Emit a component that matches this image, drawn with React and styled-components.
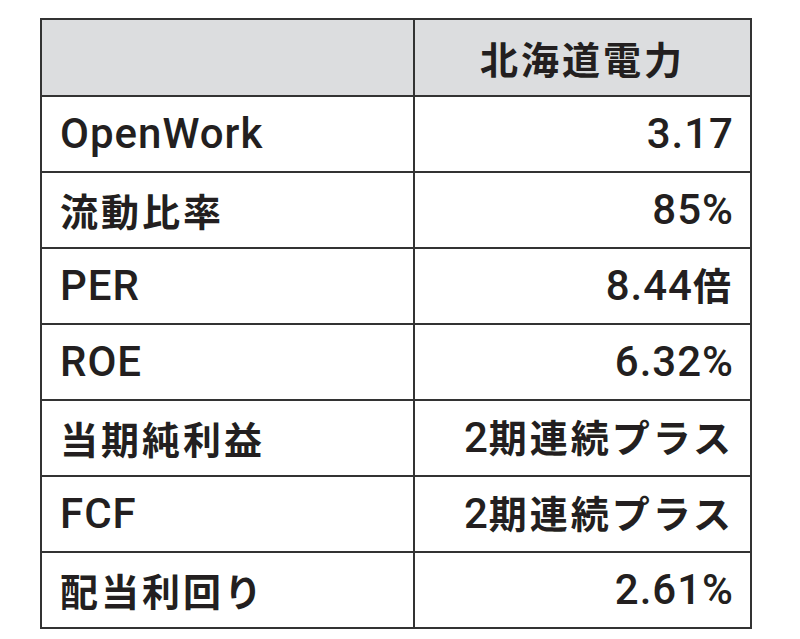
import styled, { createGlobalStyle } from 'styled-components';

const GlobalStyle = createGlobalStyle`
  body {
    margin: 0;
    background: #ffffff;
    font-family: "Noto Sans CJK JP", "Noto Sans", sans-serif;
  }
`;

const Page = styled.div`
  padding: 18px 0 0 40px;
`;

const Table = styled.table`
  width: 712px;
  border-collapse: collapse;
  border: 2px solid #333333;
  table-layout: fixed;
  color: #231f20;
  font-size: 38px;
  font-weight: 700;
  letter-spacing: 3px;
`;

const HeadRow = styled.tr`
  height: 77px;
  background: #dcdddf;
`;

const Row = styled.tr`
  height: 76px;
`;

const Cell = styled.td`
  border: 2px solid #333333;
  padding: 0 ${({ $align }) => ($align === 'right' ? '16px' : '18px')};
  text-align: ${({ $align }) => $align || 'left'};
  vertical-align: middle;
  line-height: 1;
  white-space: nowrap;
`;

// 英数字だけ細身の書体に
const Latin = styled.span`
  font-family: Roboto, "Noto Sans", sans-serif;
  font-size: 42px;
  font-weight: 500;
  letter-spacing: 1px;
`;

const rows = [
  ['OpenWork', '3.17'],
  ['流動比率', '85%'],
  ['PER', '8.44倍'],
  ['ROE', '6.32%'],
  ['当期純利益', '2期連続プラス'],
  ['FCF', '2期連続プラス'],
  ['配当利回り', '2.61%'],
];

const Text = ({ children }) =>
  children.split(/([A-Za-z0-9.%]+)/).filter(Boolean).map((part, i) =>
    /^[A-Za-z0-9.%]+$/.test(part) ? <Latin key={i}>{part}</Latin> : part
  );

export default function App() {
  return (
    <>
      <GlobalStyle />
      <Page>
        <Table>
          <colgroup>
            <col style={{ width: 373 }} />
            <col />
          </colgroup>
          <tbody>
            <HeadRow>
              <Cell />
              <Cell $align="center">北海道電力</Cell>
            </HeadRow>
            {rows.map(([label, value]) => (
              <Row key={label}>
                <Cell><Text>{label}</Text></Cell>
                <Cell $align="right"><Text>{value}</Text></Cell>
              </Row>
            ))}
          </tbody>
        </Table>
      </Page>
    </>
  );
}
